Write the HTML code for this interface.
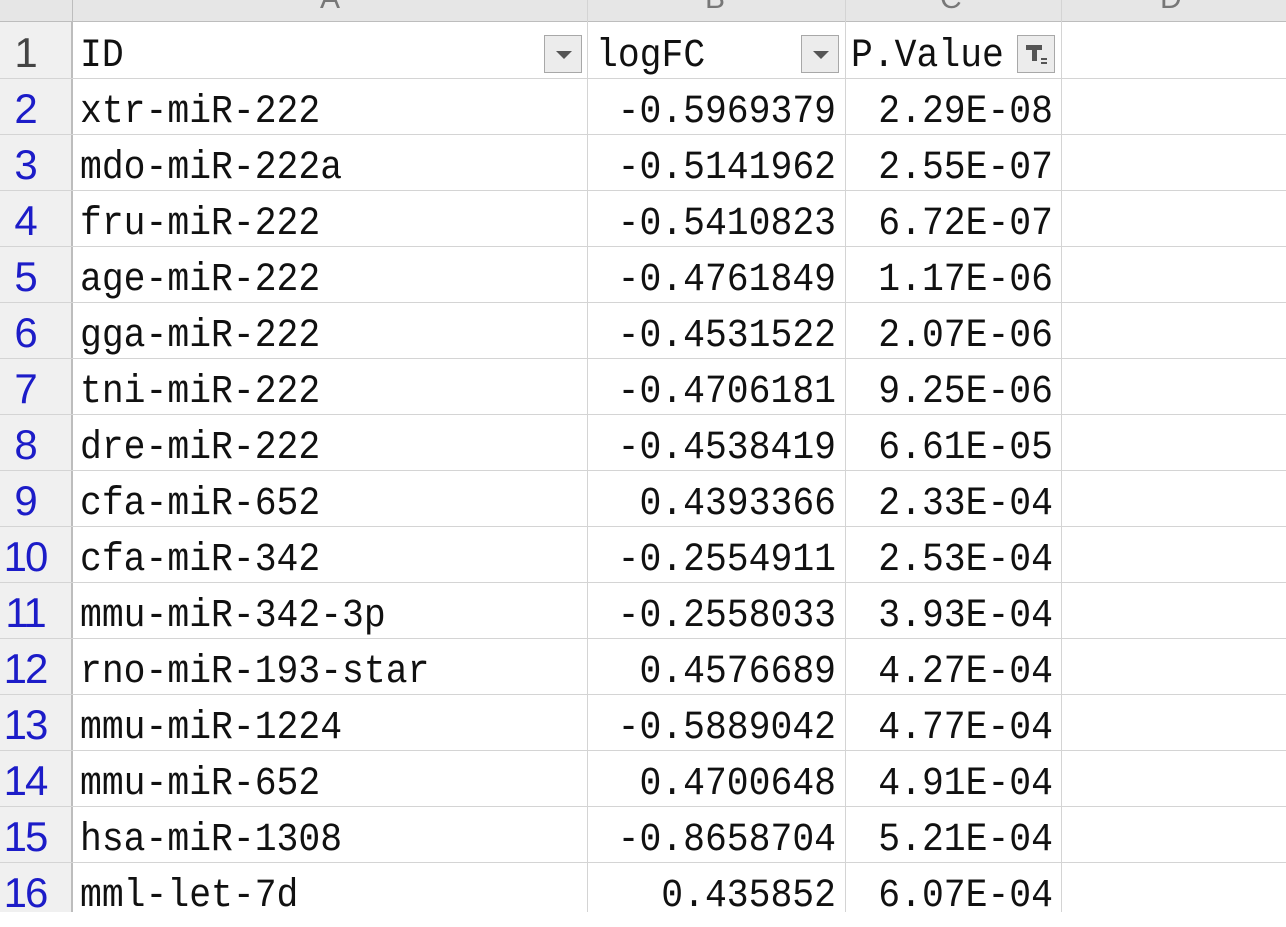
<!DOCTYPE html>
<html><head><meta charset="utf-8"><style>
body{margin:0;width:1286px;height:912px;overflow:hidden;background:#fff;position:relative;font-family:"Liberation Mono",monospace}
.hdr{position:absolute;top:0;left:0;width:1286px;height:22px;background:#e6e6e6;border-bottom:1px solid #bdbdbd;box-sizing:border-box}
.rh{position:absolute;left:0;top:22px;width:72px;height:890px;background:#f0f0f0;border-right:1px solid #bdbdbd;box-sizing:border-box}
.vl{position:absolute;top:0;width:1px;height:912px;background:#d4d4d4}
.hl{position:absolute;left:0;width:1286px;height:1px;background:#d4d4d4}
.row{position:absolute;left:0;width:1286px;height:56px}
.n{position:absolute;left:0;width:50px;text-align:center;font-family:"Liberation Sans",sans-serif;font-size:42px;line-height:56px;color:#1c1cc8;top:3px;letter-spacing:-2px}
.a,.b,.c{position:absolute;font-size:36.4px;line-height:56px;color:#111;top:6px;transform:scaleY(1.1);transform-origin:50% 50%}
.a{left:80px}
.b{right:450px;text-align:right}
.c{right:233px;text-align:right}
.btn{position:absolute;top:35px;width:38px;height:38px;background:#ececec;border:1px solid #a8a8a8;box-sizing:border-box}
.tri{position:absolute;left:11px;top:15px;width:0;height:0;border-left:8px solid transparent;border-right:8px solid transparent;border-top:8px solid #555}
.colt{position:absolute;top:-18px;font-family:"Liberation Sans",sans-serif;font-size:30px;color:#777}
</style></head><body>
<div class="hdr"></div>
<div class="colt" style="left:320px">A</div>
<div class="colt" style="left:705px">B</div>
<div class="colt" style="left:940px">C</div>
<div class="colt" style="left:1160px">D</div>
<div class="rh"></div>
<div class="vl" style="left:587px"></div>
<div class="vl" style="left:845px"></div>
<div class="vl" style="left:1061px"></div>
<div class="vl" style="left:72px;background:#bdbdbd"></div>
<div class="hl" style="top:78px"></div><div class="hl" style="top:134px"></div><div class="hl" style="top:190px"></div><div class="hl" style="top:246px"></div><div class="hl" style="top:302px"></div><div class="hl" style="top:358px"></div><div class="hl" style="top:414px"></div><div class="hl" style="top:470px"></div><div class="hl" style="top:526px"></div><div class="hl" style="top:582px"></div><div class="hl" style="top:638px"></div><div class="hl" style="top:694px"></div><div class="hl" style="top:750px"></div><div class="hl" style="top:806px"></div><div class="hl" style="top:862px"></div>

<div class="row" style="top:22px"><div class="n" style="color:#444">1</div><div class="a">ID</div><div class="a" style="left:596px">logFC</div><div class="a" style="left:851px">P.Value</div></div>
<div class="btn" style="left:544px"><div class="tri"></div></div>
<div class="btn" style="left:801px"><div class="tri"></div></div>
<div class="btn" style="left:1017px"><div style="position:absolute;left:8px;top:9px;width:16px;height:5px;background:#555"></div><div style="position:absolute;left:14px;top:13px;width:5px;height:12px;background:#555"></div><div style="position:absolute;left:23px;top:22px;width:6px;height:2px;background:#555"></div><div style="position:absolute;left:23px;top:26px;width:6px;height:2px;background:#555"></div></div>

<div class="row" style="top:78px"><div class="n">2</div><div class="a">xtr-miR-222</div><div class="b">-0.5969379</div><div class="c">2.29E-08</div></div>
<div class="row" style="top:134px"><div class="n">3</div><div class="a">mdo-miR-222a</div><div class="b">-0.5141962</div><div class="c">2.55E-07</div></div>
<div class="row" style="top:190px"><div class="n">4</div><div class="a">fru-miR-222</div><div class="b">-0.5410823</div><div class="c">6.72E-07</div></div>
<div class="row" style="top:246px"><div class="n">5</div><div class="a">age-miR-222</div><div class="b">-0.4761849</div><div class="c">1.17E-06</div></div>
<div class="row" style="top:302px"><div class="n">6</div><div class="a">gga-miR-222</div><div class="b">-0.4531522</div><div class="c">2.07E-06</div></div>
<div class="row" style="top:358px"><div class="n">7</div><div class="a">tni-miR-222</div><div class="b">-0.4706181</div><div class="c">9.25E-06</div></div>
<div class="row" style="top:414px"><div class="n">8</div><div class="a">dre-miR-222</div><div class="b">-0.4538419</div><div class="c">6.61E-05</div></div>
<div class="row" style="top:470px"><div class="n">9</div><div class="a">cfa-miR-652</div><div class="b">0.4393366</div><div class="c">2.33E-04</div></div>
<div class="row" style="top:526px"><div class="n">10</div><div class="a">cfa-miR-342</div><div class="b">-0.2554911</div><div class="c">2.53E-04</div></div>
<div class="row" style="top:582px"><div class="n">11</div><div class="a">mmu-miR-342-3p</div><div class="b">-0.2558033</div><div class="c">3.93E-04</div></div>
<div class="row" style="top:638px"><div class="n">12</div><div class="a">rno-miR-193-star</div><div class="b">0.4576689</div><div class="c">4.27E-04</div></div>
<div class="row" style="top:694px"><div class="n">13</div><div class="a">mmu-miR-1224</div><div class="b">-0.5889042</div><div class="c">4.77E-04</div></div>
<div class="row" style="top:750px"><div class="n">14</div><div class="a">mmu-miR-652</div><div class="b">0.4700648</div><div class="c">4.91E-04</div></div>
<div class="row" style="top:806px"><div class="n">15</div><div class="a">hsa-miR-1308</div><div class="b">-0.8658704</div><div class="c">5.21E-04</div></div>
<div class="row" style="top:862px"><div class="n">16</div><div class="a">mml-let-7d</div><div class="b">0.435852</div><div class="c">6.07E-04</div></div>
</body></html>
